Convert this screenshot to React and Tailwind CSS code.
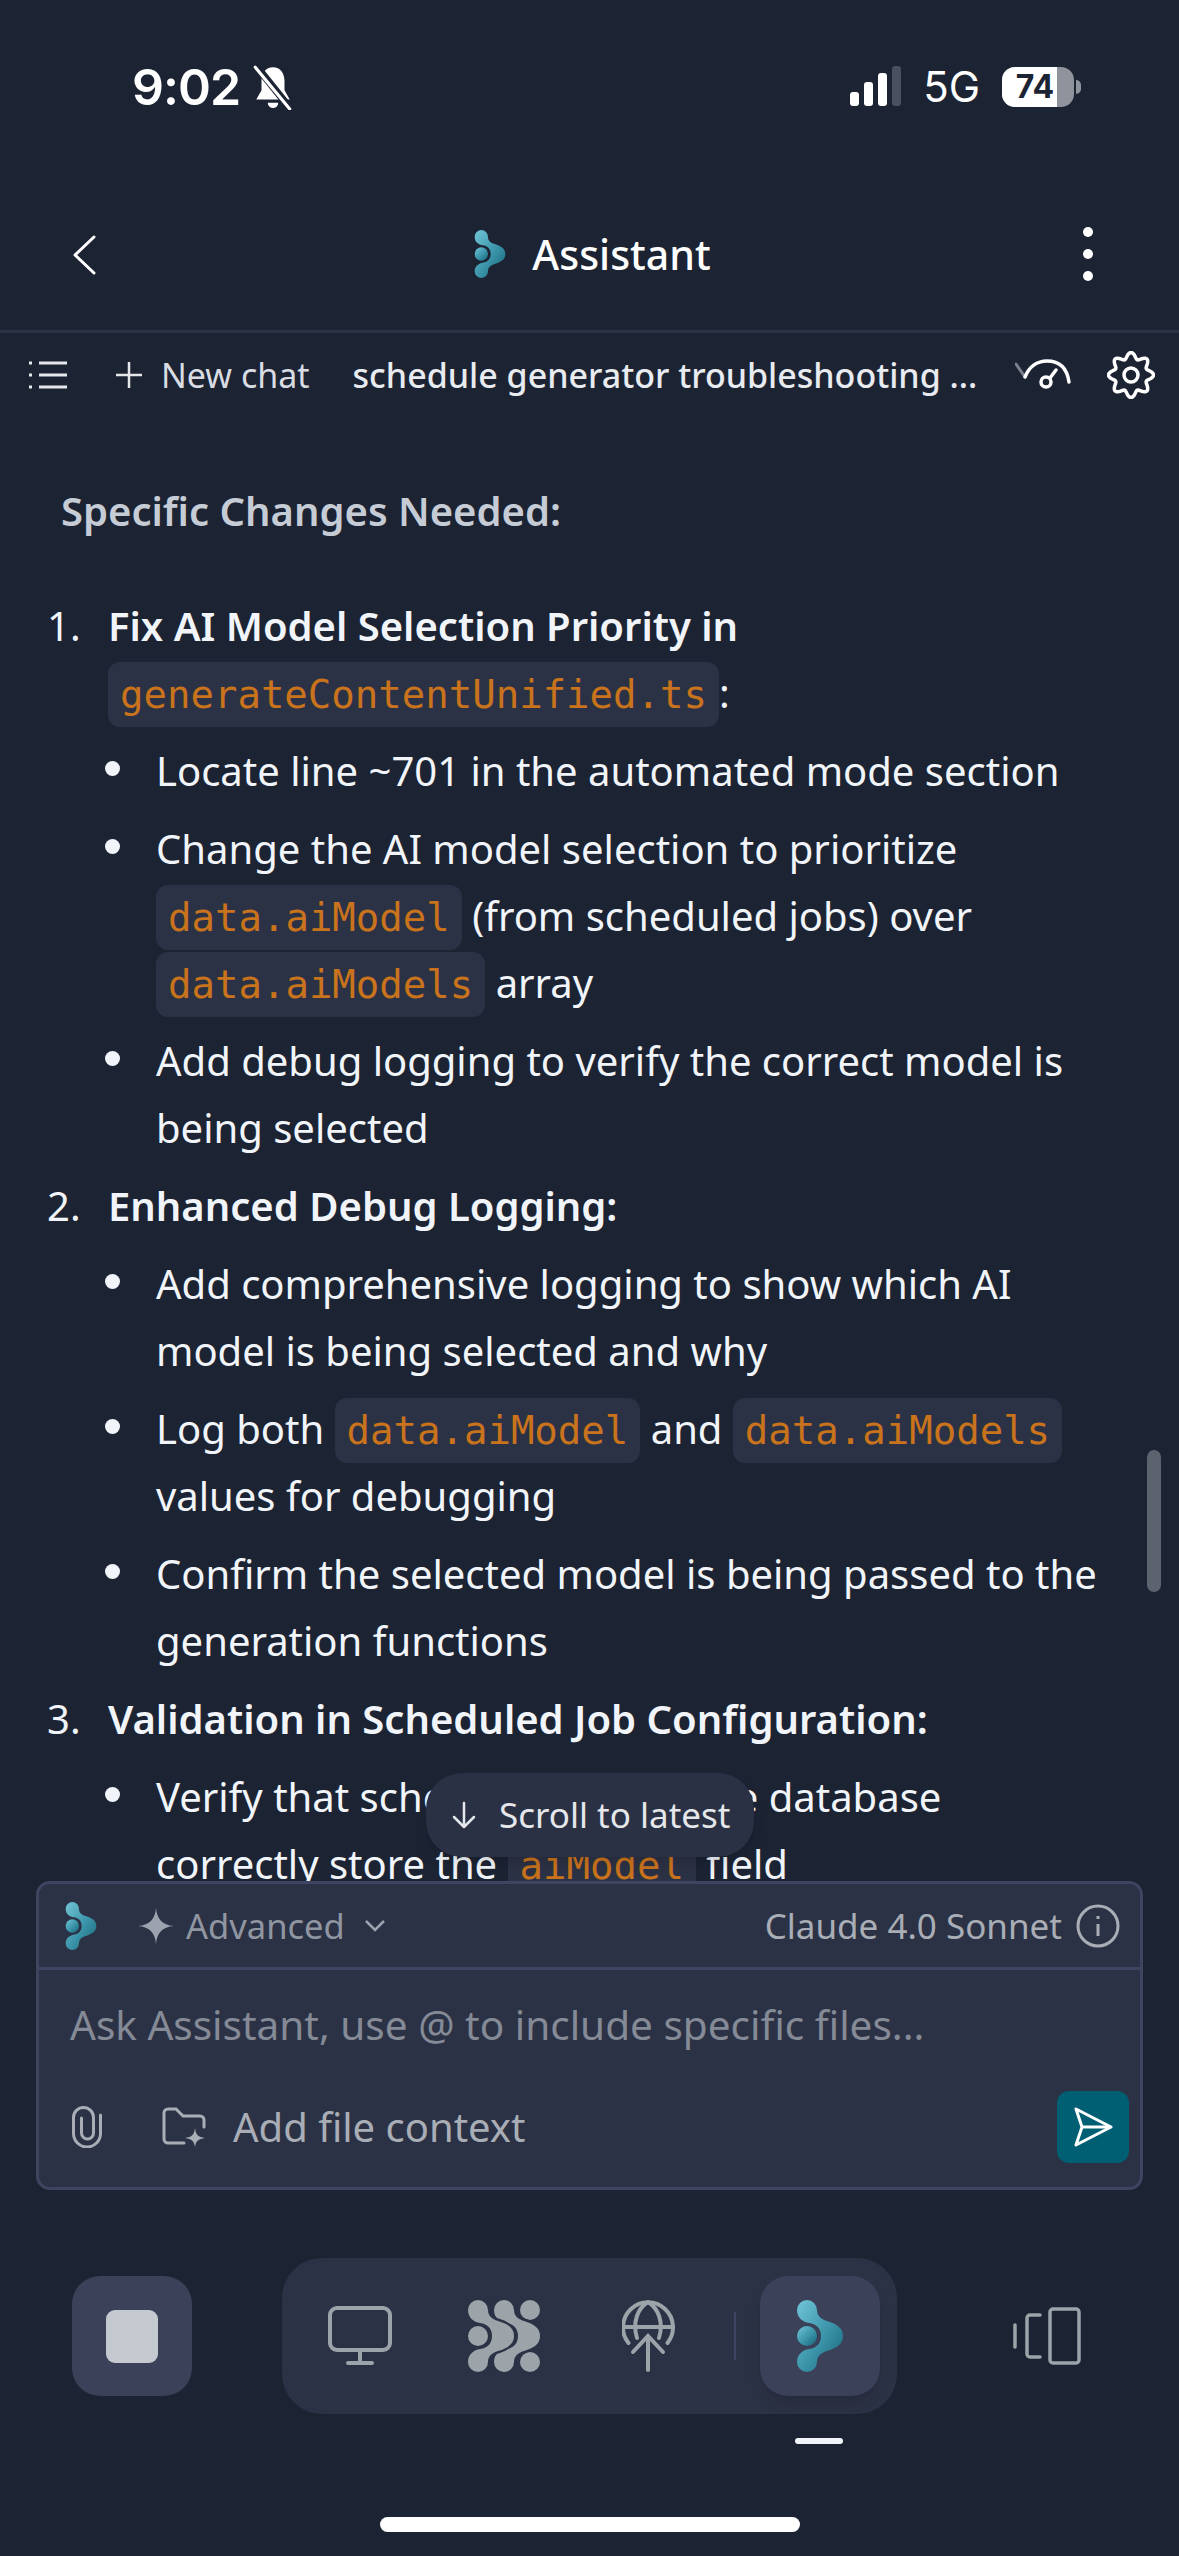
import React from "react";

// gear outline, 8 lobes
const gearPath = (() => {
  const pts = [];
  for (let i = 0; i < 160; i++) {
    const t = (i / 160) * Math.PI * 2;
    const r = 19.5 + 3 * Math.cos(8 * t);
    pts.push(`${(24 + r * Math.sin(t)).toFixed(2)} ${(24 - r * Math.cos(t)).toFixed(2)}`);
  }
  return `M${pts.join("L")}Z`;
})();

const blob =
  "M10 0A10 10 0 0 1 20 10C20 16 24 19 30 21C40 24 46 28 46 36C46 44 40 48 30 51C24 53 20 56 20 62A10 10 0 0 1 0 62C0 54 6 50 12 49C20 48 24 43 24 36C24 29 20 24 12 23C6 22 0 18 0 10A10 10 0 0 1 10 0Z";

const Logo = ({ id, className }) => (
  <svg viewBox="0 0 46 72" className={className}>
    <defs>
      <linearGradient id={id} x1="0" y1="0" x2="1" y2="1">
        <stop offset="0" stopColor="#72c4d6" />
        <stop offset="0.55" stopColor="#3a93a8" />
        <stop offset="1" stopColor="#176477" />
      </linearGradient>
    </defs>
    <path fill={`url(#${id})`} d={blob} />
    <circle cx="10" cy="36" r="10" fill={`url(#${id})`} />
  </svg>
);

const Code = ({ children }) => (
  <code className="font-['DejaVu_Sans_Mono',monospace] text-[39px] leading-none text-[#c9731c] bg-[#2c3245] rounded-[12px] px-[12px] py-[10px]">
    {children}
  </code>
);

const Bullet = ({ children }) => (
  <li className="flex mb-[11px] last:mb-0">
    <span className="w-[48px] shrink-0 pt-[24px]">
      <span className="block w-[15px] h-[15px] rounded-full bg-[#f1f5f9] ml-[-3px]" />
    </span>
    <div>{children}</div>
  </li>
);

const Item = ({ n, title, children }) => (
  <li className="flex mb-[11px]">
    <span className="w-[61px] shrink-0">{n}.</span>
    <div className="flex-1">
      {title}
      {children && <ul className="mt-[11px]">{children}</ul>}
    </div>
  </li>
);

export default function App() {
  return (
    <div className="w-[1179px] h-[2556px] bg-[#1c2333] overflow-hidden flex flex-col font-['Noto_Sans',sans-serif] text-[#f1f5f9]">
      {/* status bar */}
      <div className="h-[132px] shrink-0 flex items-start justify-between pt-[62px] pl-[132px] pr-[98px]">
        <div className="flex items-center gap-[12px]">
          <span className="font-['Inter',sans-serif] font-semibold text-[50px] leading-[50px] tracking-[-1px] text-white">
            9:02
          </span>
          <svg viewBox="0 0 40 44" className="w-[42px] h-[46px]">
            <path fill="#fff" d="M20 3C27 3 31 9 31 16V25L36 34H4L9 25V16C9 9 13 3 20 3Z" />
            <path fill="#fff" d="M15 37H25A5 5 0 0 1 15 37Z" />
            <path stroke="#1c2333" strokeWidth="7" d="M4 2L36 42" />
            <path stroke="#fff" strokeWidth="3" strokeLinecap="round" d="M3 3L36 43" />
          </svg>
        </div>
        <div className="flex items-center gap-[22px] pt-[4px]">
          <div className="flex items-end gap-[5px] h-[38px]">
            <span className="w-[9px] h-[14px] rounded-[3px] bg-white" />
            <span className="w-[9px] h-[24px] rounded-[3px] bg-white" />
            <span className="w-[9px] h-[33px] rounded-[3px] bg-white" />
            <span className="w-[9px] h-[40px] rounded-[3px] bg-[#4a505e]" />
          </div>
          <span className="font-['Inter',sans-serif] text-[42px] leading-[42px] text-white">5G</span>
          <div className="flex items-center gap-[2px]">
            <div className="w-[72px] h-[40px] rounded-[13px] overflow-hidden flex bg-[#8f939c] relative">
              <div className="w-[55px] bg-white" />
              <span className="absolute inset-0 flex items-center justify-center pr-[6px] font-['Inter',sans-serif] font-bold text-[32px] leading-[40px] text-[#1c2333]">
                74
              </span>
            </div>
            <span className="w-[5px] h-[14px] rounded-r-full bg-[#8f939c]" />
          </div>
        </div>
      </div>

      {/* header */}
      <div className="h-[198px] shrink-0 relative flex items-center justify-center pt-[46px] pl-[6px]">
        <svg viewBox="0 0 24 40" className="absolute left-[72px] top-[103px] w-[24px] h-[40px]" fill="none" stroke="#fff" strokeWidth="3" strokeLinecap="round" strokeLinejoin="round">
          <path d="M22 2L3 20L22 38" />
        </svg>
        <div className="flex items-center gap-[26px]">
          <Logo id="lg-head" className="w-[32px] h-[48px]" />
          <span className="text-[41px] leading-[48px] font-medium text-white">Assistant</span>
        </div>
        <div className="absolute left-[1083px] top-[95px] flex flex-col gap-[12px]">
          <span className="w-[10px] h-[10px] rounded-full bg-white" />
          <span className="w-[10px] h-[10px] rounded-full bg-white" />
          <span className="w-[10px] h-[10px] rounded-full bg-white" />
        </div>
      </div>

      {/* toolbar */}
      <div className="h-[87px] shrink-0 border-t-[3px] border-[#2c3245] flex items-center pl-[28px] pr-[24px]">
        <svg viewBox="0 0 40 28" className="w-[40px] h-[28px] shrink-0" stroke="#e5e7eb" strokeWidth="3">
          <path d="M11 2H39M11 14H39M11 26H39" />
          <path d="M1 2H4M1 14H4M1 26H4" />
        </svg>
        <svg viewBox="0 0 28 28" className="w-[28px] h-[28px] ml-[47px] shrink-0" stroke="#e5e7eb" strokeWidth="2.5">
          <path d="M14 1V27M1 14H27" />
        </svg>
        <span className="ml-[18px] text-[34px] leading-[48px] text-[#d9dde3] whitespace-nowrap">New chat</span>
        <span className="ml-[43px] text-[34px] leading-[48px] font-medium text-[#e8ebef] whitespace-nowrap">
          schedule generator troubleshooting ...
        </span>
        <svg viewBox="0 0 60 34" className="ml-auto w-[60px] h-[34px] shrink-0" fill="none" strokeLinecap="round">
          <path stroke="#7c818b" strokeWidth="3" d="M1 6L10 19" />
          <path stroke="#fff" strokeWidth="3.5" d="M10 19C14 9 22 3 32 3C44 3 52 10 54 24" />
          <circle cx="31" cy="24" r="5" stroke="#fff" strokeWidth="3.5" />
          <path stroke="#fff" strokeWidth="3.5" d="M35 20L41 12" />
        </svg>
        <svg viewBox="0 0 48 48" className="ml-[32px] w-[48px] h-[48px] shrink-0" fill="none" stroke="#fff" strokeWidth="3.5">
          <path d={gearPath} />
          <circle cx="24" cy="24" r="7" />
        </svg>
      </div>

      {/* messages */}
      <main className="relative h-[1464px] shrink-0 overflow-hidden">
        <div className="pl-[47px] pr-[40px] text-[40px] leading-[67px]">
          <h3 className="pl-[14px] pt-[60px] mb-[48px] font-semibold text-[#c6ccd6]">Specific Changes Needed:</h3>
          <ol>
            <Item
              n={1}
              title={
                <>
                  <strong className="font-semibold">Fix AI Model Selection Priority in</strong>
                  <br />
                  <Code>generateContentUnified.ts</Code>:
                </>
              }
            >
              <Bullet>Locate line ~701 in the automated mode section</Bullet>
              <Bullet>
                Change the AI model selection to prioritize
                <br />
                <Code>data.aiModel</Code> (from scheduled jobs) over
                <br />
                <Code>data.aiModels</Code> array
              </Bullet>
              <Bullet>
                Add debug logging to verify the correct model is
                <br />
                being selected
              </Bullet>
            </Item>
            <Item n={2} title={<strong className="font-semibold">Enhanced Debug Logging:</strong>}>
              <Bullet>
                Add comprehensive logging to show which AI
                <br />
                model is being selected and why
              </Bullet>
              <Bullet>
                Log both <Code>data.aiModel</Code> and <Code>data.aiModels</Code>
                <br />
                values for debugging
              </Bullet>
              <Bullet>
                Confirm the selected model is being passed to the
                <br />
                generation functions
              </Bullet>
            </Item>
            <Item n={3} title={<strong className="font-semibold">Validation in Scheduled Job Configuration:</strong>}>
              <Bullet>
                Verify that scheduled jobs in the database
                <br />
                correctly store the <Code>aiModel</Code> field
              </Bullet>
            </Item>
          </ol>
        </div>

        {/* scrollbar */}
        <div className="absolute left-[1147px] top-[1033px] w-[14px] h-[142px] rounded-full bg-[#5c626e]" />

        {/* scroll to latest */}
        <div className="absolute left-[426px] top-[1356px] w-[328px] h-[84px] rounded-[36px] bg-[#2b3145] shadow-lg flex items-center gap-[22px] pl-[25px]">
          <svg viewBox="0 0 26 28" className="w-[26px] h-[28px] shrink-0" fill="none" stroke="#e5e7eb" strokeWidth="2.5" strokeLinecap="round" strokeLinejoin="round">
            <path d="M13 2V26M3 16L13 26L23 16" />
          </svg>
          <span className="text-[35px] leading-[44px] text-[#e5e7eb] whitespace-nowrap">Scroll to latest</span>
        </div>
      </main>

      {/* composer */}
      <div className="mx-[36px] h-[309px] shrink-0 rounded-[14px] border-[3px] border-[#3d4560] bg-[#2c3245] flex flex-col">
        <div className="h-[86px] shrink-0 border-b-[3px] border-[#3d4560] flex items-center pl-[26px] pr-[20px]">
          <Logo id="lg-comp" className="w-[32px] h-[48px]" />
          <svg viewBox="0 0 36 36" className="ml-[41px] w-[36px] h-[36px]" fill="#9ca3af">
            <path d="M18 0C19 11 24 17 36 18C24 19 19 25 18 36C17 25 12 19 0 18C12 17 17 11 18 0Z" />
          </svg>
          <span className="ml-[12px] text-[34.5px] leading-[48px] text-[#9096a1]">Advanced</span>
          <svg viewBox="0 0 20 12" className="ml-[20px] w-[20px] h-[12px]" fill="none" stroke="#9ca3af" strokeWidth="2.5">
            <path d="M1 1L10 10L19 1" />
          </svg>
          <span className="ml-auto text-[35px] leading-[48px] text-[#a9aeb6]">Claude 4.0 Sonnet</span>
          <svg viewBox="0 0 44 44" className="ml-[14px] w-[44px] h-[44px]" fill="none" stroke="#a9aeb6" strokeWidth="3">
            <circle cx="22" cy="22" r="20" />
            <path d="M22 20V32M22 12V15" />
          </svg>
        </div>
        <div className="pl-[31px] pt-[30px] text-[40.5px] leading-[50px] text-[#848a96] whitespace-nowrap">
          Ask Assistant, use @ to include specific files...
        </div>
        <div className="flex items-center pl-[33px] pr-[11px] mt-auto mb-[24px] h-[72px]">
          <svg viewBox="0 0 30 42" className="w-[30px] h-[42px]" fill="none" stroke="#a9aeb6" strokeWidth="3" strokeLinecap="round">
            <path d="M28.5 9V27.5A13.5 13.5 0 0 1 1.5 27.5V11.5A10 10 0 0 1 21.5 11.5V27A6 6 0 0 1 9.5 27V12" />
          </svg>
          <svg viewBox="0 0 44 40" className="ml-[60px] w-[44px] h-[40px]" fill="none" stroke="#a9aeb6" strokeWidth="3" strokeLinecap="round">
            <path d="M22 36H6A4 4 0 0 1 2 32V6A4 4 0 0 1 6 2H14L21 9H38A4 4 0 0 1 42 13V20" />
            <path fill="#a9aeb6" stroke="none" d="M33 21C34 28 36 30 43 31C36 32 34 34 33 40C32 34 30 32 23 31C30 30 32 28 33 21Z" />
          </svg>
          <span className="ml-[27px] text-[40px] leading-[50px] text-[#a9aeb6] whitespace-nowrap">Add file context</span>
          <div className="ml-auto w-[72px] h-[72px] rounded-[12px] bg-[#005f73] flex items-center justify-center">
            <svg viewBox="0 0 40 40" className="w-[40px] h-[40px]" fill="none" stroke="#fff" strokeWidth="3" strokeLinejoin="round">
              <path d="M3 2L38 20L3 38L9 20Z" />
              <path d="M9 20H38" />
            </svg>
          </div>
        </div>
      </div>

      {/* bottom dock */}
      <div className="h-[224px] shrink-0 relative pt-[68px] pl-[72px] pr-[98px] flex items-start">
        <div className="w-[120px] h-[120px] mt-[18px] rounded-[28px] bg-[#3a4159] flex items-center justify-center">
          <div className="w-[52px] h-[53px] rounded-[9px] bg-[#c5cad0]" />
        </div>
        <div className="ml-[90px] w-[615px] h-[156px] rounded-[40px] bg-[#2c3245] flex items-start pt-[18px] pl-[46px]">
          <svg viewBox="0 0 64 60" className="w-[64px] h-[60px] mt-[30px] shrink-0" fill="none" stroke="#9ca3a9" strokeWidth="4" strokeLinecap="round">
            <rect x="2" y="2" width="60" height="42" rx="7" />
            <path d="M32 46V56M20 57H44" />
          </svg>
          <svg viewBox="0 0 72 72" className="ml-[76px] w-[72px] h-[72px] mt-[24px] shrink-0" fill="#9ca3a9">
            <circle cx="10" cy="36" r="10" />
            <circle cx="62" cy="10" r="10" />
            <circle cx="62" cy="62" r="10" />
            <path d={blob} transform="translate(26 0)" stroke="#2c3245" strokeWidth="5" paintOrder="stroke" />
            <path d={blob} stroke="#2c3245" strokeWidth="5" paintOrder="stroke" />
          </svg>
          <svg viewBox="0 0 54 72" className="ml-[82px] w-[54px] h-[72px] mt-[24px] shrink-0" fill="none" stroke="#9ca3a9" strokeWidth="4" strokeLinecap="round">
            <path d="M6.5 43A25 25 0 1 1 45.5 43" />
            <path d="M15 38C10 22 16 8 26 2C36 8 42 22 37 38" />
            <path d="M1 27H51" />
            <path d="M26 70V36M11 52L26 36L41 52" />
          </svg>
          <span className="ml-[58px] mt-[36px] w-[2px] h-[48px] bg-[#3d4560] shrink-0" />
          <div className="ml-[24px] w-[120px] h-[120px] shrink-0 rounded-[28px] bg-[#3a4159] shadow-lg flex items-center justify-center">
            <Logo id="lg-dock" className="w-[46px] h-[72px]" />
          </div>
        </div>
        <svg viewBox="0 0 68 58" className="ml-[116px] mt-[49px] w-[68px] h-[58px] shrink-0" fill="none" stroke="#9ca3a9" strokeWidth="3.5" strokeLinecap="round">
          <rect x="37" y="2" width="29" height="54" rx="3" />
          <path d="M27 8H17A3 3 0 0 0 14 11V47A3 3 0 0 0 17 50H27" />
          <path d="M2 18V40" />
        </svg>
        {/* active tab marker */}
        <div className="absolute left-[795px] top-[248px] w-[48px] h-[6px] rounded-full bg-[#f1f5f9]" />
        {/* home indicator */}
        <div className="absolute left-[380px] top-[327px] w-[420px] h-[15px] rounded-full bg-white" />
      </div>
    </div>
  );
}
